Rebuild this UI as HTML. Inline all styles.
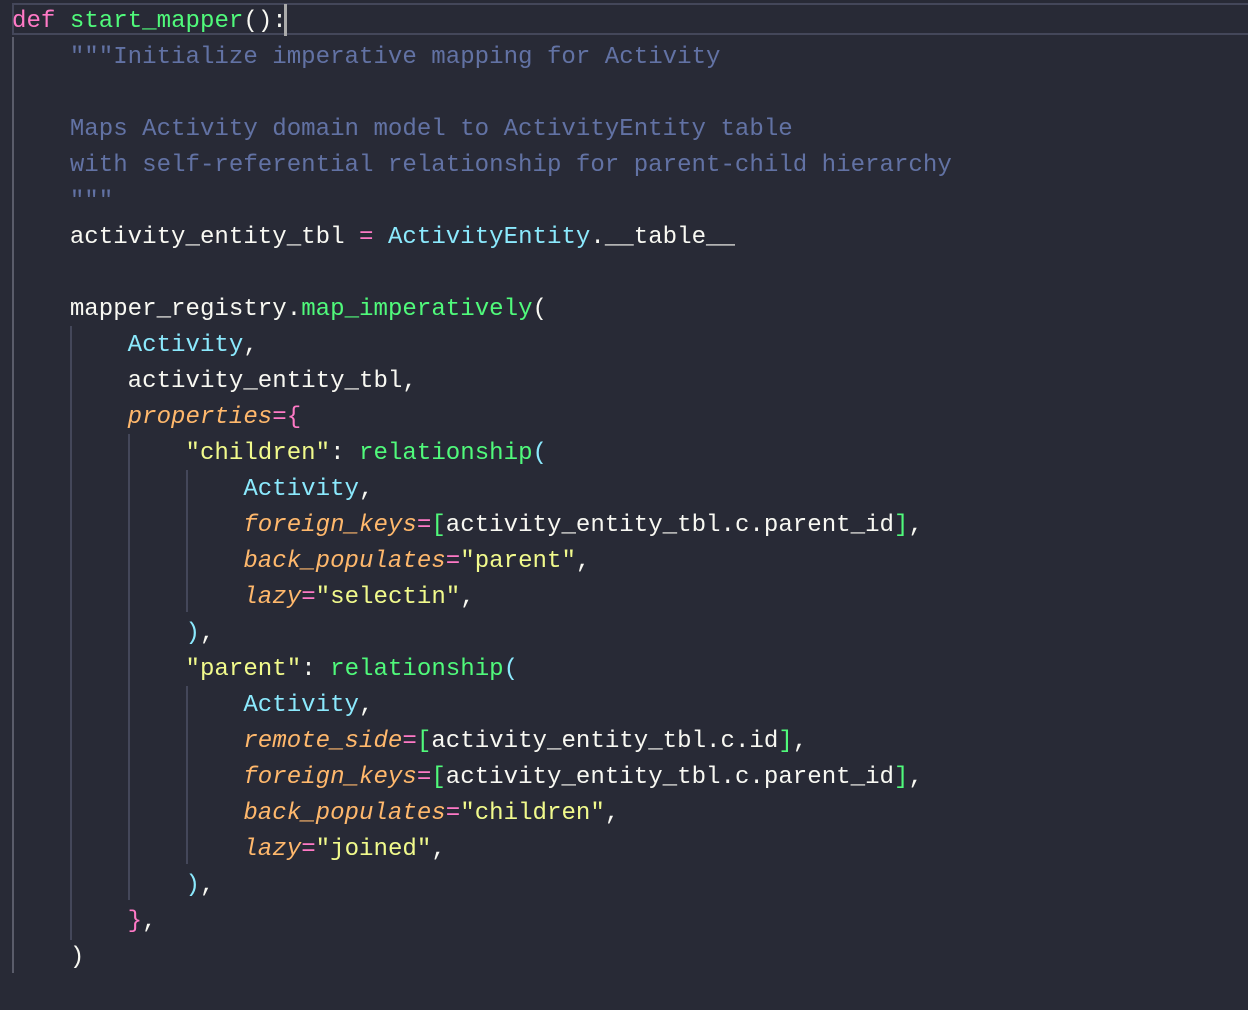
<!DOCTYPE html>
<html><head><style>
html,body{margin:0;padding:0;background:#282a36;width:1248px;height:1010px;overflow:hidden}
.hl{position:absolute;left:12px;top:3px;width:1240px;height:32px;border:2px solid #44475a;box-sizing:border-box}
.cur{position:absolute;left:284px;top:4px;width:3px;height:32px;background:#aaa}
.g{position:absolute;width:2px;background:#44475a}
pre{position:absolute;left:12px;top:4px;margin:0;font-family:"Liberation Mono",monospace;font-size:24.1px;line-height:36px;color:#f8f8f2}
.k{color:#ff79c6}.f{color:#50fa7b}.c{color:#6272a4}.t{color:#8be9fd}.p{color:#ffb86c;font-style:italic}.s{color:#f1fa8c}
</style></head><body>
<div class="hl"></div><div class="cur"></div>
<div class="g" style="left:12px;top:37px;height:936px;background:#5a5c6a"></div>
<div class="g" style="left:70px;top:326px;height:614px"></div>
<div class="g" style="left:128px;top:434px;height:466px"></div>
<div class="g" style="left:186px;top:470px;height:142px"></div>
<div class="g" style="left:186px;top:686px;height:178px"></div>
<pre><span class="k">def</span> <span class="f">start_mapper</span>():
    <span class="c">"""Initialize imperative mapping for Activity</span>

<span class="c">    Maps Activity domain model to ActivityEntity table</span>
<span class="c">    with self-referential relationship for parent-child hierarchy</span>
<span class="c">    """</span>
    activity_entity_tbl <span class="k">=</span> <span class="t">ActivityEntity</span>.__table__

    mapper_registry.<span class="f">map_imperatively</span>(
        <span class="t">Activity</span>,
        activity_entity_tbl,
        <span class="p">properties</span><span class="k">={</span>
            <span class="s">"children"</span>: <span class="f">relationship</span><span class="t">(</span>
                <span class="t">Activity</span>,
                <span class="p">foreign_keys</span><span class="k">=</span><span class="f">[</span>activity_entity_tbl.c.parent_id<span class="f">]</span>,
                <span class="p">back_populates</span><span class="k">=</span><span class="s">"parent"</span>,
                <span class="p">lazy</span><span class="k">=</span><span class="s">"selectin"</span>,
            <span class="t">)</span>,
            <span class="s">"parent"</span>: <span class="f">relationship</span><span class="t">(</span>
                <span class="t">Activity</span>,
                <span class="p">remote_side</span><span class="k">=</span><span class="f">[</span>activity_entity_tbl.c.id<span class="f">]</span>,
                <span class="p">foreign_keys</span><span class="k">=</span><span class="f">[</span>activity_entity_tbl.c.parent_id<span class="f">]</span>,
                <span class="p">back_populates</span><span class="k">=</span><span class="s">"children"</span>,
                <span class="p">lazy</span><span class="k">=</span><span class="s">"joined"</span>,
            <span class="t">)</span>,
        <span class="k">}</span>,
    )</pre>
</body></html>
